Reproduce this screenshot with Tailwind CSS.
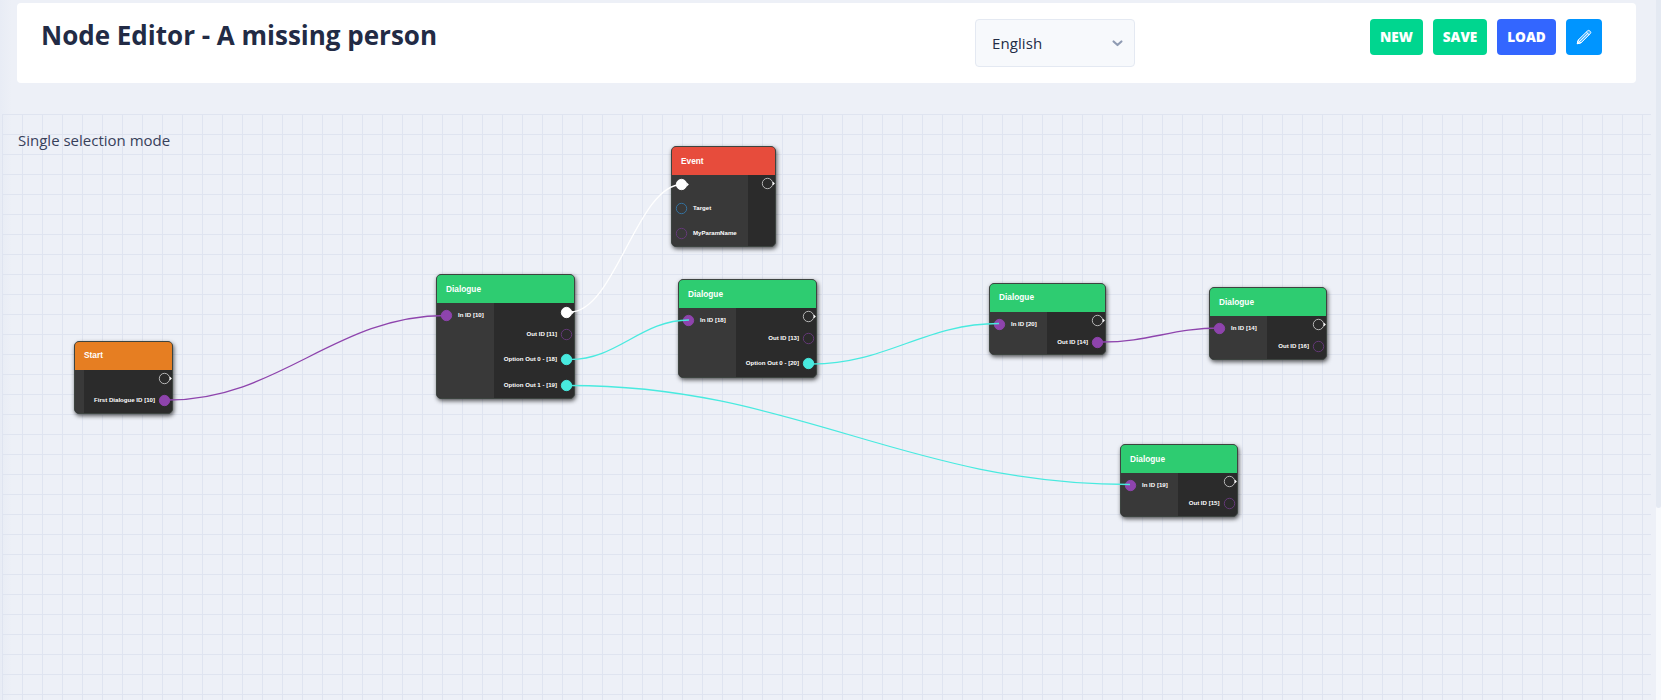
<!DOCTYPE html>
<html lang="en">
<head>
<meta charset="utf-8">
<title>Node Editor</title>
<script src="https://cdn.jsdelivr.net/npm/@tailwindcss/browser@4"></script>
</head>
<body class="h-[700px] overflow-hidden bg-[#edf0f7] font-['Open_Sans',sans-serif] text-[#222b45]">
<div class="flex h-full">
  <div class="flex min-w-0 flex-1 flex-col bg-[linear-gradient(to_right,#e8ecf5,#edf0f7_12px)]">
    <header class="mt-[3px] mr-5 ml-[17px] flex h-20 shrink-0 items-start rounded bg-white pt-4 pl-6">
      <h1 class="w-[934px] shrink-0 text-[26px] leading-8 font-bold">Node Editor - A missing person</h1>
      <div class="flex h-12 w-40 items-center justify-between rounded border border-[#e4e9f2] bg-[#f7f9fc] pr-[11px] pl-4">
        <span class="text-[15px] leading-6 font-medium tracking-[0.1px]">English</span>
        <svg class="h-[7px] w-[11px]" viewBox="0 0 11 7" fill="none" stroke="#8f9bb3" stroke-width="2.1" stroke-linecap="round" stroke-linejoin="round"><path d="M1.6 1.4 5.5 5.1 9.4 1.4"/></svg>
      </div>
      <div class="ml-[235px] flex gap-2.5 text-[13.6px] font-extrabold text-white">
        <button class="h-9 w-[53px] rounded bg-[#00d68f] leading-4">NEW</button>
        <button class="h-9 w-[54px] rounded bg-[#00d68f] leading-4">SAVE</button>
        <button class="h-9 w-[59px] rounded bg-[#3366ff] leading-4">LOAD</button>
        <button class="flex h-9 w-9 items-center justify-center rounded bg-[#0095ff]" aria-label="Edit">
          <svg class="h-4 w-4" viewBox="0 0 16 16" fill="none" stroke="#fff" stroke-width="1" stroke-linejoin="round"><path d="M1.3 14.7 2 11.2 11.4 2Q12.6.8 13.7 1.9L14.3 2.4Q15.4 3.5 14.2 4.7L4.9 14Z" fill="#fff" fill-opacity=".3"/><path d="M2.2 11.2 4.9 14M3.6 12.5 12 4.2M10.3 3.1 13.1 5.8"/><path d="M1.3 14.7 1.8 12.4 3.6 14.2Z" fill="#fff"/></svg>
        </button>
      </div>
    </header>
    <main class="relative mt-[31px] mr-[5px] ml-0.5 flex-1 overflow-hidden bg-[linear-gradient(#dfe4f0_1px,transparent_1px),linear-gradient(90deg,#dfe4f0_1px,transparent_1px)] bg-[size:20px_20px]">
      <p class="pt-[14px] pl-4 text-[15px] leading-6 font-normal text-[#37405a]">Single selection mode</p>
      <div id="nodes"></div>
      <svg class="absolute inset-0 h-full w-full" fill="none" stroke-width="1.3"><g id="wires" transform="translate(-2 -114)"></g></svg>
    </main>
  </div>
  <div class="w-[5px] bg-[#f7f9fc]"><div class="h-[508px] rounded-b-full bg-[#e4e9f2]"></div></div>
</div>

<template id="node">
  <section class="absolute flex flex-col overflow-hidden rounded-[5px] border border-[#3d4440] bg-[#2b2b2b] font-['Liberation_Sans',sans-serif] font-bold text-white shadow-[1px_2px_4px_rgba(0,0,0,0.65)]">
    <h2 class="flex h-7 shrink-0 items-center pl-[9px] text-[8.3px] leading-none"></h2>
    <div class="flex flex-1">
      <div class="bg-[#393939]"></div>
      <div class="-mr-px flex-1"></div>
    </div>
  </section>
</template>

<script>
const P = '#8e44ad', C = '#48eadf', W = '#ffffff', T = '#3477a8';
const dim = '#693a7e';
const exec = (h, on) => ({ h, stroke: on ? W : '#c4c4c4', fill: on ? W : 'none', exec: true });
const port = (h, label, color, on) => ({ h, label, stroke: color, fill: on ? color : 'none' });
const G = '#2ecc71';
const nodes = [
  ['Start', '#e67e22', 74, 340.5, 99, 73, 10, [], [exec(18), port(26, 'First Dialogue ID [10]', P, 1)]],
  ['Dialogue', G, 436, 274, 139, 125, 58, [port(25, 'In ID [10]', P, 1)], [exec(18, 1), port(26, 'Out ID [11]', dim), port(25, 'Option Out 0 - [18]', C, 1), port(26, 'Option Out 1 - [19]', C, 1)]],
  ['Event', '#e74c3c', 671, 146, 105, 100.5, 77, [exec(19, 1), port(28, 'Target', T), port(23, 'MyParamName', dim)], [exec(17)]],
  ['Dialogue', G, 678, 279, 139, 98.5, 58, [port(25, 'In ID [18]', P, 1)], [exec(17), port(26, 'Out ID [13]', dim), port(25, 'Option Out 0 - [20]', C, 1)]],
  ['Dialogue', G, 989, 282.5, 117, 72.5, 58, [port(25, 'In ID [20]', P, 1)], [exec(18), port(26, 'Out ID [14]', P, 1)]],
  ['Dialogue', G, 1209, 287, 118, 73, 58, [port(25, 'In ID [14]', P, 1)], [exec(17), port(26, 'Out ID [16]', dim)]],
  ['Dialogue', G, 1120, 444, 117.5, 73, 58, [port(24, 'In ID [19]', P, 1)], [exec(17), port(26, 'Out ID [15]', dim)]],
];
function portRow(p, out) {
  const tip = p.exec ? '<path d="M11.8 4.4 13.9 6.5 11.8 8.6Z" fill="#fff"/>' : '';
  const dot = `<svg class="h-[13px] w-[15px] shrink-0" viewBox="0 0 15 13"><circle cx="6.5" cy="6.5" r="5.2" fill="${p.fill}" stroke="${p.stroke}" stroke-width="0.9"/>${tip}</svg>`;
  const text = p.label ? `<span class="text-[6.1px] leading-none whitespace-nowrap">${p.label}</span>` : '';
  return out
    ? `<div class="flex items-center justify-end gap-[3px]" style="height:${p.h}px">${text}${dot}</div>`
    : `<div class="flex items-center gap-[3px] pl-[3px]" style="height:${p.h}px">${dot}${text}</div>`;
}
for (const [title, color, x, y, w, h, split, ins, outs] of nodes) {
  const el = document.getElementById('node').content.firstElementChild.cloneNode(true);
  el.style.cssText = `left:${x - 2}px;top:${y - 114}px;width:${w}px;height:${h}px`;
  const head = el.querySelector('h2');
  head.textContent = title;
  head.style.background = color;
  const [left, right] = el.querySelector('div').children;
  left.style.width = split - 1 + 'px';
  left.innerHTML = ins.map(p => portRow(p, false)).join('');
  right.innerHTML = outs.map(p => portRow(p, true)).join('');
  document.getElementById('nodes').append(el);
}
const wires = [
  [P, 168, 400, 446, 315.5], [W, 570, 312, 682, 184.5], [C, 570, 359.5, 689, 320],
  [C, 570, 385.5, 1130, 484.5], [C, 812, 364, 999, 323.5], [P, 1102, 342, 1220, 328],
];
document.getElementById('wires').innerHTML = wires.map(([c, a, b, x, y]) => {
  const d = (x - a) * 0.4;
  return `<path stroke="${c}" d="M${a} ${b}C${a + d} ${b} ${x - d} ${y} ${x} ${y}"/>`;
}).join('');
</script>
</body>
</html>
